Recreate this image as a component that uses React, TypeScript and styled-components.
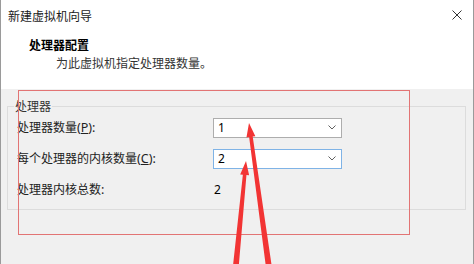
import React from "react";
import styled, { createGlobalStyle } from "styled-components";

const Global = createGlobalStyle`
  html, body { margin: 0; padding: 0; background: #f0f0f0; }
  body { font-family: "Noto Sans CJK SC", "Noto Sans", sans-serif; }
`;

const Window = styled.div`
  position: relative;
  width: 474px;
  height: 264px;
  box-sizing: border-box;
  border-left: 1px solid #9a9a9a;
  border-right: 1px solid #9a9a9a;
  background: #f0f0f0;
  overflow: hidden;
  display: flex;
  flex-direction: column;
`;

const TitleBar = styled.div`
  height: 30px;
  flex: none;
  background: #ffffff;
  display: flex;
  align-items: center;
  justify-content: space-between;
  padding: 0 11px 0 7px;
  font-size: 12px;
  color: #1a1a1a;
`;

const CloseButton = styled.div`
  width: 10px;
  height: 10px;
  display: flex;
  color: #333;
`;

const Header = styled.div`
  height: 59px;
  flex: none;
  box-sizing: border-box;
  background: #ffffff;
  padding: 7px 0 0 28px;
  display: flex;
  flex-direction: column;
  gap: 2px;
`;

const HeaderTitle = styled.div`
  font-size: 12px;
  line-height: 16px;
  font-weight: 700;
  color: #000;
`;

const HeaderSub = styled.div`
  font-size: 12px;
  line-height: 16px;
  color: #333;
  padding-left: 27px;
`;

const Body = styled.div`
  flex: 1;
  padding: 9px 6px 0 6px;
`;

const Group = styled.fieldset`
  margin: 0;
  padding: 3px 0 9px 9px;
  border: 1px solid #dcdcdc;
  width: 459px;
  box-sizing: border-box;
  display: grid;
  grid-template-columns: 196px 129px;
  row-gap: 10px;
  align-items: center;
`;

const Legend = styled.legend`
  margin-left: -3px;
  padding: 0 1px;
  font-size: 12px;
  line-height: 16px;
  color: #333;
`;

const Label = styled.div`
  font-size: 12px;
  line-height: 20px;
  color: #222;
  white-space: nowrap;
`;

const Mnemonic = styled.span`
  font-family: "Noto Sans", sans-serif;
  font-size: 12.5px;
  text-decoration: ${(p: { $u?: boolean }) => (p.$u ? "underline" : "none")};
`;

const Combo = styled.div<{ $focused?: boolean }>`
  height: 20px;
  box-sizing: border-box;
  background: #fff;
  border: 1px solid ${(p) => (p.$focused ? "#7fb3e6" : "#adadad")};
  display: flex;
  align-items: center;
  justify-content: space-between;
  padding: 0 5px 0 4px;
  font-family: "Noto Sans", sans-serif;
  font-size: 12px;
  color: #000;
`;

const Value = styled.div`
  font-family: "Noto Sans", sans-serif;
  font-size: 12px;
  line-height: 20px;
  color: #000;
  padding-left: 1px;
`;

const RedBox = styled.div`
  position: absolute;
  left: 17px;
  top: 90px;
  width: 392px;
  height: 145px;
  box-sizing: border-box;
  border: 1px solid #e27474;
  pointer-events: none;
`;

const Overlay = styled.svg`
  position: absolute;
  left: -1px;
  top: 0;
  pointer-events: none;
`;

const Chevron = () => (
  <svg width="8" height="5" viewBox="0 0 8 5">
    <path d="M0.5 0.5 L4 4 L7.5 0.5" fill="none" stroke="#606060" strokeWidth="1" />
  </svg>
);

function arrowPoints(tip: [number, number], tail: [number, number]) {
  const dx = tip[0] - tail[0];
  const dy = tip[1] - tail[1];
  const len = Math.hypot(dx, dy);
  const ux = dx / len;
  const uy = dy / len;
  const nx = -uy;
  const ny = ux;
  const headLen = 14;
  const headW = 4.5;
  const shaftTip = 1.8;
  const shaftTail = 3;
  const bx = tip[0] - ux * headLen;
  const by = tip[1] - uy * headLen;
  const pts: [number, number][] = [
    [tip[0], tip[1]],
    [bx + nx * headW, by + ny * headW],
    [bx + nx * shaftTip, by + ny * shaftTip],
    [tail[0] + nx * shaftTail, tail[1] + ny * shaftTail],
    [tail[0] - nx * shaftTail, tail[1] - ny * shaftTail],
    [bx - nx * shaftTip, by - ny * shaftTip],
    [bx - nx * headW, by - ny * headW],
  ];
  return pts.map((p) => p.join(",")).join(" ");
}

export default function App() {
  return (
    <>
      <Global />
      <Window>
        <TitleBar>
          <span>新建虚拟机向导</span>
          <CloseButton>
            <svg width="10" height="10" viewBox="0 0 10 10">
              <path d="M0.5 0.5 L9.5 9.5 M9.5 0.5 L0.5 9.5" stroke="#333" strokeWidth="1" />
            </svg>
          </CloseButton>
        </TitleBar>
        <Header>
          <HeaderTitle>处理器配置</HeaderTitle>
          <HeaderSub>为此虚拟机指定处理器数量。</HeaderSub>
        </Header>
        <Body>
          <Group>
            <Legend>处理器</Legend>
            <Label>
              处理器数量<Mnemonic>(</Mnemonic><Mnemonic $u>P</Mnemonic><Mnemonic>):</Mnemonic>
            </Label>
            <Combo>
              <span>1</span>
              <Chevron />
            </Combo>
            <Label>
              每个处理器的内核数量<Mnemonic>(</Mnemonic><Mnemonic $u>C</Mnemonic><Mnemonic>):</Mnemonic>
            </Label>
            <Combo $focused>
              <span>2</span>
              <Chevron />
            </Combo>
            <Label>
              处理器内核总数<Mnemonic>:</Mnemonic>
            </Label>
            <Value>2</Value>
          </Group>
        </Body>
        <RedBox />
        <Overlay width="474" height="264" viewBox="0 0 474 264">
          <polygon points={arrowPoints([249, 123], [270, 275])} fill="#f23434" />
          <polygon points={arrowPoints([246, 161], [235, 275])} fill="#f23434" />
        </Overlay>
      </Window>
    </>
  );
}
